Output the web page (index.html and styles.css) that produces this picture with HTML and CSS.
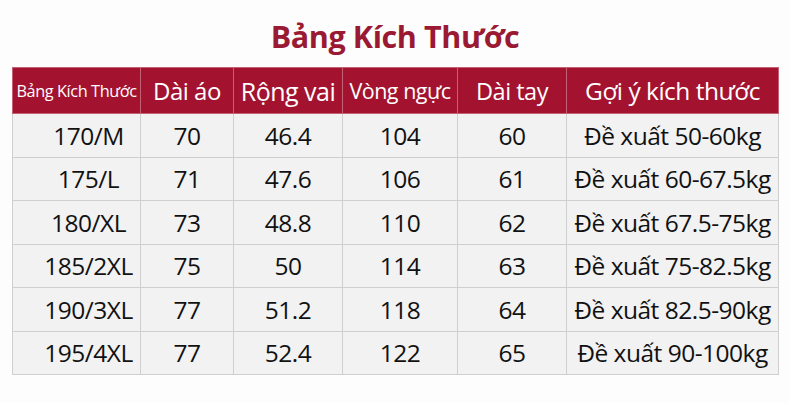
FILE: index.html
```html
<!DOCTYPE html>
<html lang="vi">
<head>
<meta charset="utf-8">
<title>Bảng Kích Thước</title>
<link rel="stylesheet" href="styles.css">
</head>
<body>
<div class="page">
  <h1 class="title">Bảng Kích Thước</h1>
  <table class="size-table">
    <colgroup>
      <col class="c1"><col class="c2"><col class="c3"><col class="c4"><col class="c5"><col class="c6">
    </colgroup>
    <thead>
      <tr>
        <th class="h-small">Bảng Kích Thước</th>
        <th class="h-dai">Dài áo</th>
        <th class="h-rong">Rộng vai</th>
        <th class="h-mid">Vòng ngực</th>
        <th class="h-tay">Dài tay</th>
        <th class="h-goi">Gợi ý kích thước</th>
      </tr>
    </thead>
    <tbody>
      <tr><td>170/M</td><td>70</td><td>46.4</td><td>104</td><td>60</td><td>Đề xuất 50-60kg</td></tr>
      <tr><td>175/L</td><td>71</td><td>47.6</td><td>106</td><td>61</td><td>Đề xuất 60-67.5kg</td></tr>
      <tr><td>180/XL</td><td>73</td><td>48.8</td><td>110</td><td>62</td><td>Đề xuất 67.5-75kg</td></tr>
      <tr><td>185/2XL</td><td>75</td><td>50</td><td>114</td><td>63</td><td>Đề xuất 75-82.5kg</td></tr>
      <tr><td>190/3XL</td><td>77</td><td>51.2</td><td>118</td><td>64</td><td>Đề xuất 82.5-90kg</td></tr>
      <tr><td>195/4XL</td><td>77</td><td>52.4</td><td>122</td><td>65</td><td>Đề xuất 90-100kg</td></tr>
    </tbody>
  </table>
</div>
</body>
</html>
```

FILE: styles.css
```css
html, body {
  margin: 0;
  padding: 0;
  background: #fdfdfd;
}
body {
  font-family: "Open Sans", "Noto Sans", sans-serif;
  color: #111;
}
.page {
  width: 790px;
  height: 403px;
  padding: 0 12px;
  box-sizing: border-box;
  display: flex;
  flex-direction: column;
}
.title {
  margin: 0;
  height: 67px;
  box-sizing: border-box;
  padding-top: 16px;
  text-align: center;
  font-size: 30.5px;
  line-height: 40px;
  font-weight: 700;
  color: #9b1a33;
  letter-spacing: -0.4px;
}
.size-table {
  width: 766px;
  border-collapse: collapse;
  table-layout: fixed;
}
.c1 { width: 128px; }
.c2 { width: 93px; }
.c3 { width: 109px; }
.c4 { width: 115px; }
.c5 { width: 109px; }
.c6 { width: 212px; }
.size-table th {
  background: #a3132f;
  color: #fff;
  font-weight: 400;
  font-size: 24px;
  height: 45px;
  padding: 0;
  border: 1px solid #c46275;
  letter-spacing: -0.5px;
  white-space: nowrap;
}
.size-table th.h-small { font-size: 16.3px; letter-spacing: -0.4px; }
.size-table th.h-dai { font-size: 24px; }
.size-table th.h-rong { font-size: 25px; }
.size-table th.h-mid { font-size: 21.5px; }
.size-table th.h-tay { font-size: 23.5px; }
.size-table th.h-goi { font-size: 24.5px; }
.size-table td {
  background: #f2f2f2;
  border: 1px solid #cfcfcf;
  text-align: center;
  font-size: 24.5px;
  height: 42.5px;
  padding: 0;
  letter-spacing: -0.5px;
  white-space: nowrap;
}
.size-table td:first-child { padding-left: 24px; }
```
